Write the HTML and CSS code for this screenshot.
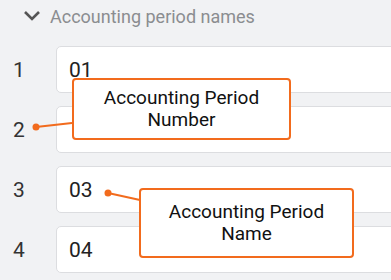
FILE: index.html
```html
<!DOCTYPE html>
<html lang="en">
<head>
  <meta charset="UTF-8" />
  <meta name="viewport" content="width=device-width, initial-scale=1.0" />
  <title>Accounting period names</title>
  <link rel="stylesheet" href="styles.css">
</head>
<body>

  <div class="section">
    <div class="section-head">
      <svg class="chevron" width="18" height="12" viewBox="0 0 18 12">
        <path d="M2 2 L9 9 L16 2" fill="none" stroke="#555" stroke-width="2.6" />
      </svg>
      <span>Accounting period names</span>
    </div>

    <div class="period-list">
      <div class="period-row">
        <span class="period-num">1</span>
        <div class="period-input">01</div>
      </div>
      <div class="period-row">
        <span class="period-num">2</span>
        <div class="period-input"></div>
      </div>
      <div class="period-row">
        <span class="period-num">3</span>
        <div class="period-input">03</div>
      </div>
      <div class="period-row">
        <span class="period-num">4</span>
        <div class="period-input">04</div>
      </div>
    </div>
  </div>

  <!-- annotation callouts -->
  <svg class="leaders" width="391" height="280">
    <line x1="36" y1="127" x2="72" y2="123" stroke="#f26b1d" stroke-width="2" />
    <circle cx="36" cy="127" r="3.5" fill="#f26b1d" />
    <line x1="108" y1="193" x2="140" y2="200" stroke="#f26b1d" stroke-width="2" />
    <circle cx="108" cy="193" r="3.5" fill="#f26b1d" />
  </svg>

  <div class="callout callout-number">Accounting Period<br>Number</div>
  <div class="callout callout-name">Accounting Period<br>Name</div>

</body>
</html>
```

FILE: styles.css
```css
body {
  margin: 0;
  background: #f1f2f4;
  font-family: 'Roboto', 'Liberation Sans', sans-serif;
  overflow: hidden;
  width: 391px;
  height: 280px;
  position: relative;
}

.section {
  overflow: hidden;
}

.section-head {
  display: flex;
  align-items: center;
  gap: 9px;
  height: 32px;
  padding-left: 23px;
  color: #8b8d90;
  font-size: 18px;
}

.chevron {
  display: block;
}

.period-list {
  display: flex;
  flex-direction: column;
  gap: 13px;
  margin-top: 14px;
}

.period-row {
  display: flex;
  align-items: center;
}

.period-num {
  flex: none;
  width: 56px;
  padding-left: 13px;
  box-sizing: border-box;
  font-size: 21px;
  color: #333;
}

.period-input {
  flex: 1;
  margin-right: -20px;
  height: 47px;
  box-sizing: border-box;
  background: #fff;
  border: 1px solid #dcdde0;
  border-radius: 5px;
  padding: 11px 12px 0;
  font-size: 21px;
  color: #222;
}

.leaders {
  position: absolute;
  left: 0;
  top: 0;
}

.callout {
  position: absolute;
  box-sizing: border-box;
  background: #fff;
  border: 2px solid #f26b1d;
  border-radius: 4px;
  display: flex;
  align-items: center;
  justify-content: center;
  text-align: center;
  font-size: 19px;
  line-height: 22px;
  color: #111;
}

.callout-number {
  left: 72px;
  top: 78px;
  width: 219px;
  height: 62px;
}

.callout-name {
  left: 139px;
  top: 188px;
  width: 215px;
  height: 70px;
}
```
